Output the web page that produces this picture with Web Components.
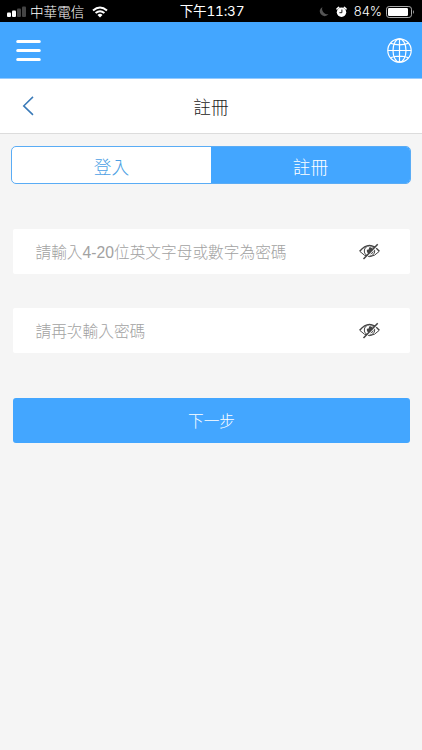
<!DOCTYPE html>
<html lang="zh-Hant">
<head>
<meta charset="utf-8">
<meta name="viewport" content="width=device-width, initial-scale=1">
<title>註冊</title>
<style>
    html, body {
        margin: 0;
        height: 100%;
        overflow: hidden;
    }
    body {
        --blue: #43a6ff;
        background: #f5f5f5;
        font-family: "Liberation Sans", "Noto Sans CJK TC", sans-serif;
        font-weight: 300;
    }
</style>
</head>
<body>
<signup-page></signup-page>
<script>
    function define(name, html) {
        var tpl = document.createElement('template');
        tpl.innerHTML = html;
        customElements.define(name, class extends HTMLElement {
            constructor() {
                super();
                this.attachShadow({mode: 'open'}).appendChild(tpl.content.cloneNode(true));
            }
        });
    }

    define('status-bar', `
        <style>
            :host {
                display: grid;
                grid-template-columns: 1fr auto 1fr;
                align-items: center;
                box-sizing: border-box;
                height: 22px;
                padding: 1px 7px 0;
                background: #000;
                color: #fff;
                font-size: 13.6px;
                line-height: 21px;
                white-space: nowrap;
            }
            div { display: flex; align-items: center; height: 21px; }
            svg { display: block; flex: none; }
            .right { justify-content: flex-end; }
            .signal { margin-right: 4px; }
            .carrier { padding-top: 1px; }
            .wifi { margin-left: 8px; }
            .time {
                font-family: Inter, "Noto Sans CJK TC", sans-serif;
                font-size: 13.6px;
                font-weight: 400;
                font-feature-settings: "tnum";
                letter-spacing: -.2px;
                padding-left: 2px;
            }
            .moon { margin-right: 7px; }
            .percent { font-family: Inter, sans-serif; font-size: 13px; margin: 0 4px 0 7px; }
        </style>
        <div>
            <svg class="signal" width="19" height="12" viewBox="0 0 19 12">
                <rect x="0" y="6.5" width="4" height="4.5" rx="1" fill="#fff"/>
                <rect x="5" y="4.5" width="4" height="6.5" rx="1" fill="#fff"/>
                <rect x="10" y="2.5" width="4" height="8.5" rx="1" fill="#444"/>
                <rect x="15" y="0.5" width="4" height="10.5" rx="1" fill="#444"/>
            </svg>
            <span class="carrier">中華電信</span>
            <svg class="wifi" width="16" height="12" viewBox="0 0 16 12" fill="none" stroke="#fff" stroke-width="2">
                <path d="M1 4.6Q8-1.6 15 4.6M3.6 7.1Q8 3.3 12.4 7.1"/>
                <path d="M5.5 8.9Q8 6.8 10.5 8.9L8 11.4Z" fill="#fff" stroke="none"/>
            </svg>
        </div>
        <span class="time">下午11:37</span>
        <div class="right">
            <svg class="moon" width="10" height="11" viewBox="0 0 10 11">
                <path d="M3.4.9A4.900 4.900 0 1 0 9.500 8.300A5.600 5.600 0 0 1 3.400.9Z" fill="#555"/>
            </svg>
            <svg width="11" height="12" viewBox="0 0 11 12">
                <path d="M1 2.900L2.700 1.400M10 2.900L8.300 1.400" stroke="#fff" stroke-width="1.500" stroke-linecap="round"/>
                <circle cx="5.500" cy="6.300" r="4.700" fill="#fff"/>
                <path d="M5.900 3.500V6.700H3.400" fill="none" stroke="#000" stroke-width=".9"/>
            </svg>
            <span class="percent">84%</span>
            <svg width="29" height="12" viewBox="0 0 29 12">
                <rect x=".5" y=".5" width="25" height="11" rx="2.700" fill="none" stroke="#aaa"/>
                <rect x="2" y="2" width="20" height="8" rx="1.200" fill="#fff"/>
                <path d="M27 4Q29 6 27 8Z" fill="#999"/>
            </svg>
        </div>
    `);

    define('app-bar', `
        <style>
            :host {
                display: flex;
                justify-content: space-between;
                align-items: center;
                box-sizing: border-box;
                height: 57px;
                padding: 0 10px 0 16px;
                background: var(--blue);
                border-bottom: 1px solid #94caff;
            }
            svg { display: block; }
        </style>
        <svg width="25" height="22" viewBox="0 0 25 22" stroke="#fff" stroke-width="3" stroke-linecap="round">
            <path d="M1.700 2.500H23.300M1.700 11.500H23.300M1.700 20.500H23.300"/>
        </svg>
        <svg width="25" height="25" viewBox="0 0 25 25" fill="none" stroke="#fff" stroke-width="1.200">
            <circle cx="12.500" cy="12.500" r="11.700"/>
            <ellipse cx="12.500" cy="12.500" rx="6.500" ry="11.700"/>
            <path d="M12.500.8V24.200M.8 12.500H24.200M3.300 5.300Q12.500 8.300 21.700 5.300M3.300 19.700Q12.500 16.700 21.700 19.700"/>
        </svg>
    `);

    define('page-title', `
        <style>
            :host {
                display: grid;
                grid-template-columns: 1fr auto 1fr;
                align-items: center;
                box-sizing: border-box;
                height: 55px;
                padding: 0 22px;
                background: #fff;
                border-bottom: 1px solid #dcdcdc;
                color: #222;
                font-size: 17.700px;
            }
            svg { display: block; }
        </style>
        <svg width="13" height="20" viewBox="0 0 13 20" fill="none" stroke="#3a7ab8" stroke-width="1.500">
            <path d="M11 .9L1.700 9.900L11 18.900"/>
        </svg>
        <slot></slot>
    `);

    define('tab-switch', `
        <style>
            :host {
                display: flex;
                box-sizing: border-box;
                height: 38px;
                margin: 12px 11px 0;
                border: 1px solid #5aacf5;
                border-radius: 5px;
                background: #fff;
                overflow: hidden;
            }
            ::slotted(*) {
                flex: 1;
                display: flex;
                align-items: center;
                justify-content: center;
                color: #4c9fe4;
                font-size: 17.700px;
                padding-top: 2px;
            }
            ::slotted([active]) {
                background: var(--blue);
                color: #fff;
            }
        </style>
        <slot></slot>
    `);

    define('password-field', `
        <style>
            :host {
                display: flex;
                align-items: center;
                justify-content: space-between;
                box-sizing: border-box;
                height: 45px;
                padding: 0 30px 0 22.500px;
                background: #fff;
                border-radius: 2px;
                color: #a2a2a2;
                font-size: 15.700px;
                white-space: nowrap;
            }
            svg { display: block; margin-bottom: 1px; }
        </style>
        <slot></slot>
        <svg width="21" height="17" viewBox="0 0 21 17" fill="none" stroke="#444">
            <path d="M.7 8.300Q10.500-3.500 20.300 8.300" stroke-width="1.400"/>
            <path d="M.7 8.300Q10.500 19 20.300 8.300" stroke-width="1"/>
            <circle cx="10.500" cy="8" r="5.200" stroke-width="1"/>
            <path d="M8 6.600Q10.300 7.400 10 4.600A3.400 3.400 0 1 1 8 6.600Z" fill="#444" stroke="none"/>
            <path d="M5.900 15.800L19.400 2" stroke="#fff" stroke-width="1.300"/>
            <path d="M4.500 16L18.700 1.300" stroke-width="1.500"/>
        </svg>
    `);

    define('primary-button', `
        <style>
            :host {
                display: flex;
                align-items: center;
                justify-content: center;
                height: 45px;
                border-radius: 3px;
                background: var(--blue);
                color: #fff;
                font-size: 15.700px;
            }
        </style>
        <slot></slot>
    `);

    define('signup-page', `
        <style>
            :host { display: block; }
            form {
                display: flex;
                flex-direction: column;
                padding: 45px 12px 0 13px;
                gap: 34px;
            }
            primary-button { margin-top: 11px; }
        </style>
        <status-bar></status-bar>
        <app-bar></app-bar>
        <page-title><span>註冊</span></page-title>
        <tab-switch>
            <span>登入</span>
            <span active>註冊</span>
        </tab-switch>
        <form>
            <password-field>請輸入4-20位英文字母或數字為密碼</password-field>
            <password-field>請再次輸入密碼</password-field>
            <primary-button>下一步</primary-button>
        </form>
    `);
</script>
</body>
</html>
